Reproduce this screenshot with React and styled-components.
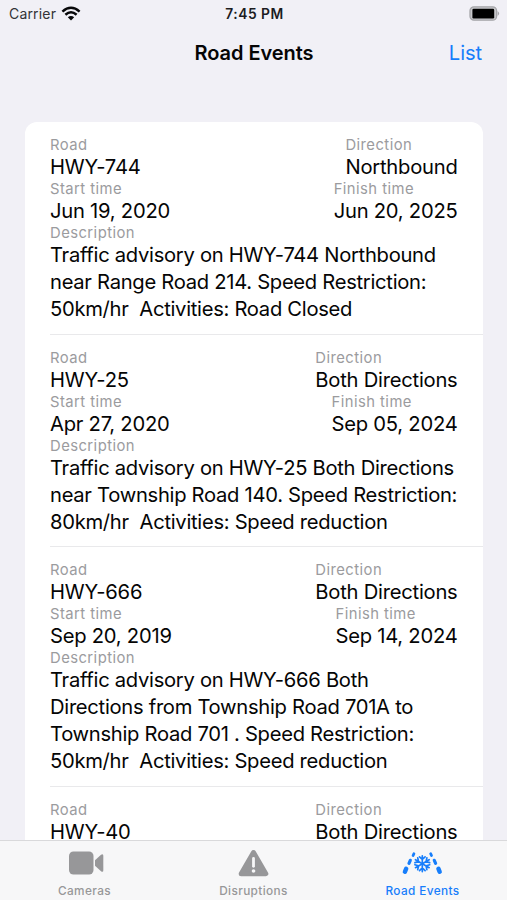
import React from "react"
import styled, { createGlobalStyle } from "styled-components"

const GlobalStyle = createGlobalStyle`
  * {
    box-sizing: border-box;
  }
  body {
    margin: 0;
    background: #f1f0f6;
    color: #050505;
    font-family: Inter, "Liberation Sans", sans-serif;
    overflow: hidden;
  }
`

const Screen = styled.div`
  width: 507px;
  height: 900px;
  display: flex;
  flex-direction: column;
  overflow: hidden;
`

const StatusBar = styled.header`
  display: grid;
  grid-template-columns: 1fr auto 1fr;
  align-items: center;
  flex: none;
  height: 27px;
  padding: 0 7px 0 9px;
`

const Carrier = styled.div`
  display: flex;
  align-items: center;
  gap: 5px;
  color: #333337;
  font-size: 14px;
  letter-spacing: 0.18px;

  svg {
    margin-top: -1px;
  }
`

const Clock = styled.div`
  color: #1c1c1f;
  font-size: 13.8px;
  font-weight: 600;
  letter-spacing: 0.5px;
`

const Battery = styled.svg`
  justify-self: end;
`

const NavBar = styled.nav`
  display: grid;
  grid-template-columns: 1fr auto 1fr;
  align-items: center;
  flex: none;
  height: 51px;
  padding: 0 25px 0 26px;
`

const Title = styled.h1`
  grid-column: 2;
  margin: 0;
  font-size: 20px;
  font-weight: 600;
  letter-spacing: -0.06px;
`

const NavButton = styled.a`
  justify-self: end;
  color: #177efb;
  font-size: 20.2px;
  letter-spacing: -0.1px;
`

const Content = styled.main`
  flex: 1;
  min-height: 0;
  overflow: hidden;
  padding: 44px 24.5px 0 25px;
`

const Card = styled.div`
  background: #fff;
  border-radius: 12px 12px 0 0;
  padding-left: 25px;
`

const Event = styled.article`
  padding: 13px 25px 11.5px 0;
  border-bottom: 1px solid #e9e9eb;
`

const Columns = styled.div`
  display: flex;
  justify-content: space-between;
`

const Label = styled.div`
  color: #9b9b9e;
  font-size: 14.8px;
  line-height: 20px;
  letter-spacing: 0.45px;
  white-space: nowrap;
`

const Value = styled.div`
  font-size: 20.2px;
  line-height: 24px;
  letter-spacing: -0.24px;
  white-space: nowrap;
`

const Description = styled.p`
  margin: -2px 0 0;
  font-size: 20.2px;
  line-height: 27px;
  letter-spacing: -0.29px;
  white-space: pre;
`

const TabBar = styled.footer`
  display: grid;
  grid-template-columns: repeat(3, 1fr);
  flex: none;
  height: 60px;
  background: #f7f7f8;
  border-top: 1px solid #d9d9db;
`

const Tab = styled.a`
  display: flex;
  flex-direction: column;
  align-items: center;
  color: ${props => (props.$active ? "#177efb" : "#979799")};
  font-size: 11.8px;
  font-weight: 500;
  line-height: 16px;
  letter-spacing: 0.38px;

  svg {
    display: block;
    margin: 6px 0 4px;
  }
`

const events = [
  {
    road: "HWY-744",
    direction: "Northbound",
    start: "Jun 19, 2020",
    finish: "Jun 20, 2025",
    description: [
      "Traffic advisory on HWY-744 Northbound",
      "near Range Road 214. Speed Restriction:",
      "50km/hr  Activities: Road Closed",
    ],
  },
  {
    road: "HWY-25",
    direction: "Both Directions",
    start: "Apr 27, 2020",
    finish: "Sep 05, 2024",
    description: [
      "Traffic advisory on HWY-25 Both Directions",
      "near Township Road 140. Speed Restriction:",
      "80km/hr  Activities: Speed reduction",
    ],
  },
  {
    road: "HWY-666",
    direction: "Both Directions",
    start: "Sep 20, 2019",
    finish: "Sep 14, 2024",
    description: [
      "Traffic advisory on HWY-666 Both",
      "Directions from Township Road 701A to",
      "Township Road 701 . Speed Restriction:",
      "50km/hr  Activities: Speed reduction",
    ],
  },
  {
    road: "HWY-40",
    direction: "Both Directions",
  },
]

const Field = ({ label, value }) => (
  <div>
    <Label>{label}</Label>
    <Value>{value}</Value>
  </div>
)

const EventRow = ({ event }) => (
  <Event>
    <Columns>
      <Field label="Road" value={event.road} />
      <Field label="Direction" value={event.direction} />
    </Columns>
    {event.start && (
      <Columns>
        <Field label="Start time" value={event.start} />
        <Field label="Finish time" value={event.finish} />
      </Columns>
    )}
    {event.description && (
      <>
        <Label>Description</Label>
        <Description>{event.description.join("\n")}</Description>
      </>
    )}
  </Event>
)

const WifiIcon = () => (
  <svg width="20" height="15" viewBox="0 0 20 15">
    <g fill="none" stroke="#08080a" strokeWidth="2.5">
      <path d="M1.4 5.6 Q10 -2 18.6 5.6" />
      <path d="M4.4 8.8 Q10 3.8 15.6 8.8" />
    </g>
    <path d="M10 14.4 L6.8 11.2 Q10 8.6 13.2 11.2 Z" fill="#08080a" />
  </svg>
)

const BatteryIcon = () => (
  <Battery width="31" height="16" viewBox="0 0 31 16">
    <rect x="1" y="0.8" width="26.6" height="13.4" rx="4" fill="#c9c9cc" stroke="#a5a5a9" strokeWidth="1.3" />
    <rect x="3.4" y="2.8" width="21.8" height="9.6" rx="1.2" fill="#000" />
    <path d="M28.6 5.1 Q31.6 7.5 28.6 9.9 Z" fill="#a5a5a9" />
  </Battery>
)

const CameraIcon = () => (
  <svg width="36" height="32" viewBox="-1 0 36 32" overflow="visible">
    <rect x="1" y="4.5" width="24.5" height="23" rx="4.5" fill="currentColor" />
    <path d="M27 13.2 L33 7.8 Q35.3 6.3 35.3 8.8 V23.2 Q35.3 25.7 33 24.2 L27 18.8 Z" fill="currentColor" />
  </svg>
)

const WarningIcon = () => (
  <svg width="32" height="32" viewBox="0.5 0 32 32" overflow="visible">
    <path
      d="M16 5.5 L28.3 26.7 H3.7 Z"
      fill="currentColor"
      stroke="currentColor"
      strokeWidth="5"
      strokeLinejoin="round"
    />
    <path d="M16 11.5 V19.3" stroke="#f7f7f8" strokeWidth="2.8" strokeLinecap="round" />
    <circle cx="16" cy="24" r="1.8" fill="#f7f7f8" />
  </svg>
)

const RoadIcon = () => (
  <svg width="42" height="32" viewBox="0.7 0 42 32" overflow="visible">
    <g fill="none" stroke="currentColor" strokeLinecap="round">
      <g strokeWidth="2.8">
        <path d="M12.6 6.7 L11.8 8.5" />
        <path d="M29.4 6.7 L30.2 8.5" />
      </g>
      <g strokeWidth="3.2">
        <path d="M9 13.3 L7.7 16.3" />
        <path d="M33 13.3 L34.3 16.3" />
      </g>
      <g strokeWidth="4.4">
        <path d="M4.9 21.7 L3.6 24.8" />
        <path d="M37.1 21.7 L38.4 24.8" />
      </g>
      {[0, 60, 120, 180, 240, 300].map(angle => (
        <path
          key={angle}
          d="M21 16.7 V8.8 M18.2 9.8 L21 12.4 L23.8 9.8"
          strokeWidth="1.7"
          transform={`rotate(${angle} 21 16.7)`}
        />
      ))}
    </g>
  </svg>
)

const App = () => (
  <>
    <GlobalStyle />
    <Screen>
      <StatusBar>
        <Carrier>
          Carrier
          <WifiIcon />
        </Carrier>
        <Clock>7:45 PM</Clock>
        <BatteryIcon />
      </StatusBar>
      <NavBar>
        <Title>Road Events</Title>
        <NavButton>List</NavButton>
      </NavBar>
      <Content>
        <Card>
          {events.map(event => (
            <EventRow event={event} key={event.road} />
          ))}
        </Card>
      </Content>
      <TabBar>
        <Tab>
          <CameraIcon />
          Cameras
        </Tab>
        <Tab>
          <WarningIcon />
          Disruptions
        </Tab>
        <Tab $active>
          <RoadIcon />
          Road Events
        </Tab>
      </TabBar>
    </Screen>
  </>
)

export default App
